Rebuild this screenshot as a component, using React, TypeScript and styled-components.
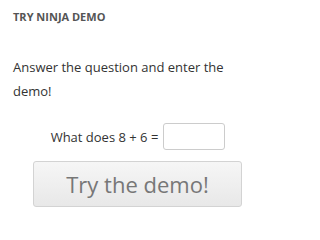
import { FC, useState } from 'react';
import styled, { createGlobalStyle } from 'styled-components';

const GlobalStyle = createGlobalStyle`
  body {
    margin: 0;
    background: #fff;
    font-family: 'Open Sans', 'Liberation Sans', sans-serif;
  }
`;

const App: FC = () => {
  const [answer, setAnswer] = useState('');

  return (
    <>
      <GlobalStyle />
      <Widget>
        <Title>TRY NINJA DEMO</Title>
        <Intro>Answer the question and enter the demo!</Intro>
        <Form onSubmit={e => e.preventDefault()}>
          <QuestionRow>
            <Question>What does 8 + 6 =</Question>
            <AnswerInput value={answer} onChange={e => setAnswer(e.target.value)} />
          </QuestionRow>
          <DemoButton type="submit">Try the demo!</DemoButton>
        </Form>
      </Widget>
    </>
  );
};

const Widget = styled.section`
  padding: 10px 13px 0 13px;
  color: #333;
`;

const Title = styled.h3`
  margin: 0;
  font-size: 11px;
  line-height: 14px;
  font-weight: 700;
  color: #555;
`;

const Intro = styled.p`
  margin: 31px 0 0 0;
  width: 215px;
  font-size: 13px;
  line-height: 24px;
  color: #333;
`;

const Form = styled.form`
  margin: 20px 0 0 20px;
  width: 209px;
  display: flex;
  flex-direction: column;
  align-items: center;
`;

const QuestionRow = styled.div`
  display: flex;
  align-items: center;
  gap: 5px;
  margin-left: 1px;
`;

const Question = styled.span`
  font-size: 13px;
  color: #333;
`;

const AnswerInput = styled.input`
  box-sizing: border-box;
  width: 62px;
  height: 27px;
  border: 1px solid #ccc;
  border-radius: 3px;
  background: #fff;
  outline: none;
  padding: 0 6px;
  font-family: inherit;
`;

const DemoButton = styled.button`
  box-sizing: border-box;
  margin-top: 11px;
  width: 209px;
  height: 46px;
  border: 1px solid #d3d3d3;
  border-radius: 3px;
  background: linear-gradient(#f6f6f6, #e8e8e8);
  font-family: inherit;
  font-size: 22px;
  color: #777;
  cursor: pointer;
`;

export default App;
